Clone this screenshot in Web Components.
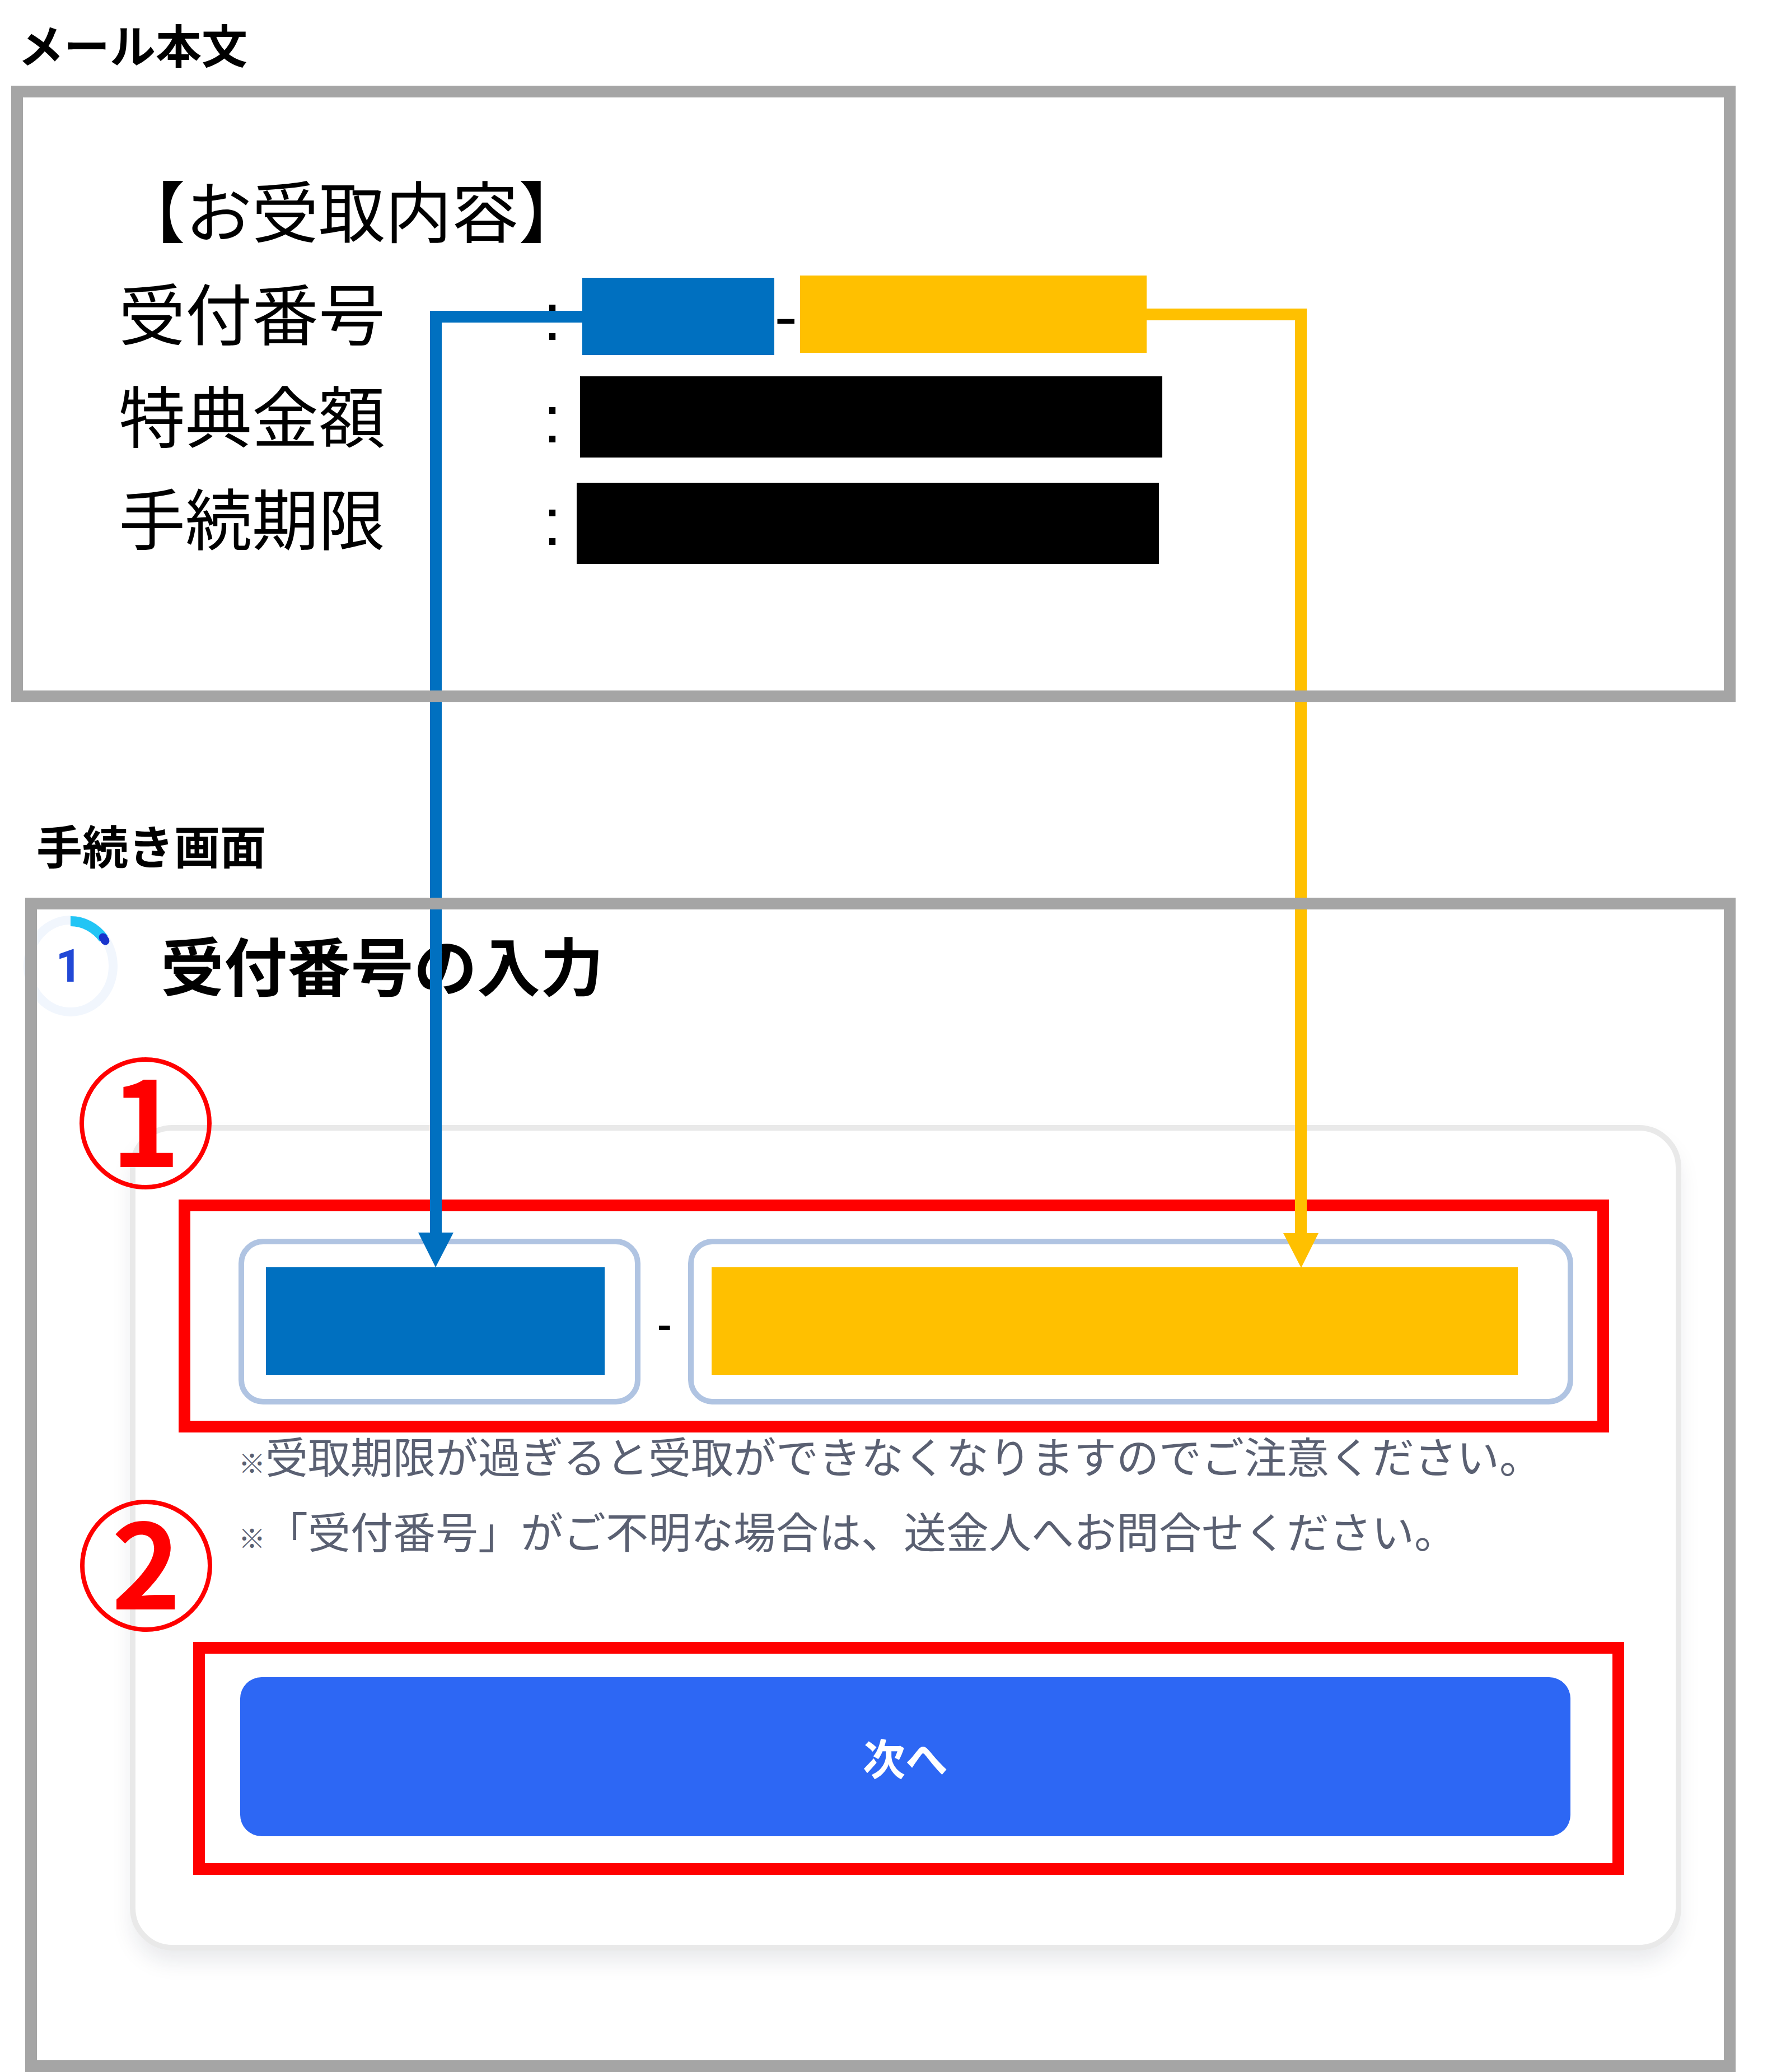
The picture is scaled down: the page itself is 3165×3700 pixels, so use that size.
<!DOCTYPE html>
<html lang="ja">
<head>
    <meta charset="UTF-8">
    <meta name="viewport" content="width=device-width, initial-scale=1.0">
    <title>受付番号の入力</title>
    <style>
        body {
            margin: 0;
            background: #fff;
            color: #000;
            font-family: "Noto Sans CJK JP", sans-serif;
        }
    </style>
</head>
<body>
    <guide-page>
        <guide-panel heading="メール本文" class="mail">
            <mail-body></mail-body>
        </guide-panel>
        <guide-panel heading="手続き画面" class="screen">
            <step-header step="1">受付番号の入力</step-header>
            <code-form></code-form>
        </guide-panel>
        <guide-connectors></guide-connectors>
    </guide-page>

    <script>
        // Page shell: stacks the panels, connectors lie over them
        class GuidePage extends HTMLElement {
            constructor() {
                super();
                this.attachShadow({ mode: "open" });
            }

            connectedCallback() {
                this.shadowRoot.innerHTML = `
                    <style>
                        :host {
                            display: flex;
                            flex-direction: column;
                            gap: 194px;
                            position: relative;
                            box-sizing: border-box;
                            padding: 18px 65px 0 20px;
                        }
                        ::slotted(.mail) {
                            --heading-gap: 15px;
                            --heading-indent: 12px;
                        }
                        ::slotted(.screen) {
                            --heading-gap: 35px;
                            --heading-indent: 20px;
                            margin-left: 25px;
                        }
                    </style>
                    <slot></slot>
                `;
            }
        }

        // Titled panel with a gray frame
        class GuidePanel extends HTMLElement {
            constructor() {
                super();
                this.attachShadow({ mode: "open" });
            }

            connectedCallback() {
                this.shadowRoot.innerHTML = `
                    <style>
                        :host {
                            display: block;
                        }
                        h2 {
                            margin: 0 0 var(--heading-gap);
                            padding-left: var(--heading-indent);
                            font-size: 82px;
                            font-weight: bold;
                            line-height: 120px;
                        }
                        .frame {
                            position: relative;
                            padding: 21px;
                        }
                        /* the frame is drawn above the connectors */
                        .frame::after {
                            content: "";
                            position: absolute;
                            inset: 0;
                            border: 21px solid #a5a5a5;
                            pointer-events: none;
                            z-index: 2;
                        }
                    </style>
                    <h2>${this.getAttribute("heading")}</h2>
                    <div class="frame"><slot></slot></div>
                `;
            }
        }

        class MailBody extends HTMLElement {
            constructor() {
                super();
                this.attachShadow({ mode: "open" });
            }

            connectedCallback() {
                this.shadowRoot.innerHTML = `
                    <style>
                        :host {
                            display: block;
                            padding: 107px 0 220px 171px;
                            font-size: 119px;
                            line-height: 183px;
                        }
                        p, dl, dt, dd {
                            margin: 0;
                        }
                        .row {
                            display: flex;
                            height: 183px;
                        }
                        dt {
                            display: flex;
                            align-items: baseline;
                            justify-content: space-between;
                            width: 791px;
                            margin-right: 33px;
                        }
                        dd {
                            display: flex;
                        }
                        .colon {
                            font-family: "Liberation Sans", sans-serif;
                        }
                        .dash {
                            width: 46px;
                        }
                        .bar {
                            width: 1040px;
                            height: 145px;
                            margin-top: 25px;
                            background: #000;
                        }
                        .bar.late {
                            margin-top: 32px;
                            margin-left: -6px;
                        }
                        .bar.blue {
                            width: 343px;
                            height: 138px;
                            margin-top: 32px;
                            margin-left: 4px;
                            background: #0070c0;
                        }
                        .bar.yellow {
                            width: 619px;
                            height: 138px;
                            margin-top: 28px;
                            background: #ffc000;
                        }
                    </style>
                    <p>【お受取内容】</p>
                    <dl>
                        <div class="row">
                            <dt><span>受付番号</span><span class="colon">:</span></dt>
                            <dd><div class="bar blue"></div><span class="dash">-</span><div class="bar yellow"></div></dd>
                        </div>
                        <div class="row">
                            <dt><span>特典金額</span><span class="colon">:</span></dt>
                            <dd><div class="bar"></div></dd>
                        </div>
                        <div class="row">
                            <dt><span>手続期限</span><span class="colon">:</span></dt>
                            <dd><div class="bar late"></div></dd>
                        </div>
                    </dl>
                `;
            }
        }

        class StepHeader extends HTMLElement {
            constructor() {
                super();
                this.attachShadow({ mode: "open" });
            }

            connectedCallback() {
                this.shadowRoot.innerHTML = `
                    <style>
                        :host {
                            display: flex;
                            align-items: flex-start;
                            gap: 77px;
                            padding-top: 11px;
                            margin-left: -24px;
                        }
                        svg {
                            flex: none;
                            width: 168px;
                            height: 181px;
                        }
                        text {
                            font: bold 82px Roboto, sans-serif;
                            fill: #2148d6;
                        }
                        h3 {
                            margin: 0;
                            font-size: 113px;
                            font-weight: bold;
                            line-height: 170px;
                        }
                    </style>
                    <svg viewBox="0 0 168 181" fill="none">
                        <ellipse cx="84" cy="90" rx="76" ry="82" stroke="#f1f6fd" stroke-width="16"/>
                        <path d="M84 10 A75 81 0 0 1 143 41" stroke="#22c5f5" stroke-width="18"/>
                        <path d="M142 39 L146 45" stroke="#1733cc" stroke-width="15" stroke-linecap="round"/>
                        <text x="81" y="118" text-anchor="middle">${this.getAttribute("step")}</text>
                    </svg>
                    <h3><slot></slot></h3>
                `;
            }
        }

        // Red outline with a circled number at its upper left
        class HighlightBox extends HTMLElement {
            constructor() {
                super();
                this.attachShadow({ mode: "open" });
            }

            connectedCallback() {
                this.shadowRoot.innerHTML = `
                    <style>
                        :host {
                            display: block;
                            position: relative;
                            border: 21px solid #f00;
                        }
                        .number {
                            position: absolute;
                            top: -275px;
                            left: var(--number-left);
                            box-sizing: border-box;
                            width: 236px;
                            height: 236px;
                            border: 8px solid #f00;
                            border-radius: 50%;
                            color: #f00;
                            font-size: 210px;
                            font-weight: bold;
                            line-height: 192px;
                            text-align: center;
                        }
                    </style>
                    <span class="number">${this.getAttribute("number")}</span>
                    <slot></slot>
                `;
            }
        }

        class CodeForm extends HTMLElement {
            constructor() {
                super();
                this.attachShadow({ mode: "open" });
            }

            connectedCallback() {
                this.shadowRoot.innerHTML = `
                    <style>
                        :host {
                            display: block;
                            margin: 193px 76px 196px 166px;
                        }
                        form {
                            border: 10px solid #e9e9e9;
                            border-radius: 76px;
                            padding: 123px 0 125px;
                            box-shadow: 0 24px 40px -6px rgba(20, 30, 60, 0.1);
                        }
                        highlight-box.code {
                            --number-left: -198px;
                            margin: 0 119px 0 77px;
                            padding: 49px 43px 29px 86px;
                        }
                        highlight-box.next {
                            --number-left: -223px;
                            margin: 160px 92px 0 103px;
                            padding: 42px 75px 48px 63px;
                        }
                        .fields {
                            display: grid;
                            grid-template-columns: 5fr 85px 11fr;
                            align-items: center;
                            text-align: center;
                            font-size: 72px;
                            font-weight: bold;
                        }
                        input {
                            box-sizing: border-box;
                            width: 100%;
                            height: 296px;
                            border: 10px solid #b0c4e2;
                            border-radius: 44px;
                            font: inherit;
                            outline: none;
                        }
                        /* the masked value fills the content box only */
                        .branch {
                            padding: 41px 54px 43px 39px;
                            background: #0070c0 content-box;
                        }
                        .serial {
                            padding: 41px 89px 43px 32px;
                            background: #ffc000 content-box;
                        }
                        .notes {
                            display: grid;
                            gap: 54px;
                            margin-left: 184px;
                            color: #5a6072;
                            font-size: 76px;
                            line-height: 80px;
                        }
                        p {
                            height: 80px;
                            margin: 0;
                        }
                        .mark {
                            font-size: 48px;
                            font-weight: bold;
                        }
                        button {
                            display: block;
                            width: 100%;
                            height: 284px;
                            border: none;
                            border-radius: 38px;
                            padding: 0;
                            background: #2d67f4;
                            color: #fff;
                            font: inherit;
                            font-size: 76px;
                            font-weight: bold;
                        }
                    </style>
                    <form>
                        <highlight-box class="code" number="1">
                            <div class="fields">
                                <input class="branch" type="text" aria-label="受付番号（前半）">
                                <span>-</span>
                                <input class="serial" type="text" aria-label="受付番号（後半）">
                            </div>
                        </highlight-box>
                        <div class="notes">
                            <p><span class="mark">※</span>受取期限が過ぎると受取ができなくなりますのでご注意ください。</p>
                            <p><span class="mark">※</span>「受付番号」がご不明な場合は、送金人へお問合せください。</p>
                        </div>
                        <highlight-box class="next" number="2">
                            <button type="button">次へ</button>
                        </highlight-box>
                    </form>
                `;
            }
        }

        // Arrows from the mail values to the form fields
        class GuideConnectors extends HTMLElement {
            constructor() {
                super();
                this.attachShadow({ mode: "open" });
            }

            connectedCallback() {
                this.shadowRoot.innerHTML = `
                    <style>
                        :host {
                            position: absolute;
                            inset: 0;
                            z-index: 1;
                            pointer-events: none;
                        }
                        svg {
                            display: block;
                            width: 100%;
                            height: 100%;
                        }
                    </style>
                    <svg>
                        <path d="M1040 555 H768 V2201 H747 L778 2263 L810 2201 H789 V576 H1040 Z" fill="#0070c0"/>
                        <path d="M2048 551 H2334 V2202 H2355 L2324 2264 L2292 2202 H2313 V572 H2048 Z" fill="#ffc000"/>
                    </svg>
                `;
            }
        }

        customElements.define("guide-page", GuidePage);
        customElements.define("guide-panel", GuidePanel);
        customElements.define("mail-body", MailBody);
        customElements.define("step-header", StepHeader);
        customElements.define("highlight-box", HighlightBox);
        customElements.define("code-form", CodeForm);
        customElements.define("guide-connectors", GuideConnectors);
    </script>
</body>
</html>
